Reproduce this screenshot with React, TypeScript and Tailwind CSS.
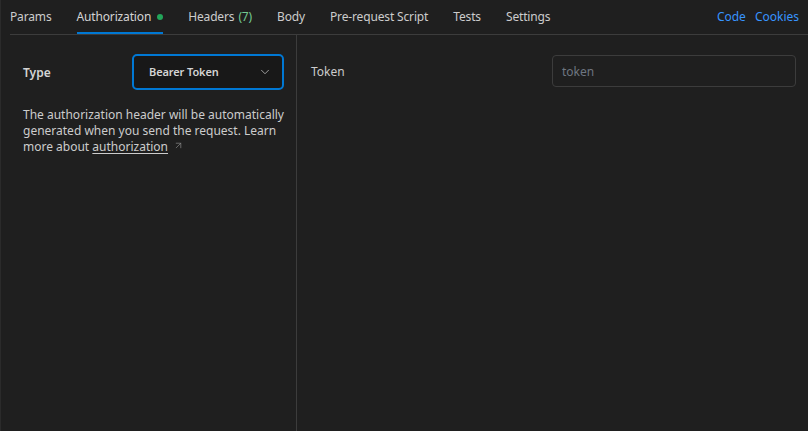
import { ChevronDown, ArrowUpRight } from "lucide-react";

const tabs = [
  { label: "Params" },
  { label: "Authorization", active: true, dot: true },
  { label: "Headers", count: "(7)" },
  { label: "Body" },
  { label: "Pre-request Script" },
  { label: "Tests" },
  { label: "Settings" },
];

export default function App() {
  return (
    <div
      className="w-[808px] h-[431px] bg-[#1f1f1f] text-[#cccccc] text-[12px] flex flex-col overflow-hidden border-l border-[#2b2b2b]"
      style={{ fontFamily: '"Noto Sans", "Open Sans", sans-serif' }}
    >
      {/* tab bar */}
      <div className="flex items-stretch h-[35px] ml-[9px] border-b border-[#3c3c3c]">
        <div className="flex gap-[25px] flex-1 tracking-[-0.15px]">
          {tabs.map((t) => (
            <div
              key={t.label}
              className={`flex items-center h-full border-b-2 pt-[1px] ${t.active ? "border-[#0078d4] text-[#d4d4d4]" : "border-transparent"}`}
            >
              <span>{t.label}</span>
              {t.count && <span className="ml-1 text-[#73c991]">{t.count}</span>}
              {t.dot && <span className="ml-[6px] w-[6px] h-[6px] rounded-full bg-[#23a55a]" />}
            </div>
          ))}
        </div>
        <div className="flex items-center gap-[9px] pr-[9px] pb-[1px] text-[#3794ff]">
          <span>Code</span>
          <span>Cookies</span>
        </div>
      </div>

      {/* body */}
      <div className="flex flex-1 ml-[9px]">
        <div className="w-[287px] border-r border-[#3c3c3c] pl-[13px] pr-[12px] pt-[19px]">
          <div className="flex items-center justify-between">
            <span className="font-semibold text-[#d4d4d4] mt-[1px]">Type</span>
            <div className="w-[152px] h-[36px] rounded-[5px] border-2 border-[#0078d4] bg-[#181818] flex items-center justify-between pl-[15px] pr-[10px]">
              <span className="text-[11px] font-semibold text-[#d4d4d4] tracking-[-0.1px]">Bearer Token</span>
              <ChevronDown size={14} strokeWidth={1.5} className="text-[#b0b0b0]" />
            </div>
          </div>
          <p className="mt-[17px] leading-[16px] text-[#cccccc]">
            The authorization header will be automatically generated when you send the request. Learn more about{" "}
            <span className="underline underline-offset-2">authorization</span>
            <ArrowUpRight size={11} strokeWidth={1.5} className="inline ml-[5px] align-baseline text-[#8a8a8a]" />
          </p>
        </div>
        <div className="flex-1 flex items-start justify-between pl-[14px] pr-[12px] pt-[20px]">
          <span className="mt-[8px] text-[#cccccc]">Token</span>
          <input
            placeholder="token"
            className="w-[244px] h-[32px] rounded-[4px] border border-[#3c3c3c] bg-transparent px-[9px] text-[12px] outline-none placeholder:text-[#6e7681]"
          />
        </div>
      </div>
    </div>
  );
}
